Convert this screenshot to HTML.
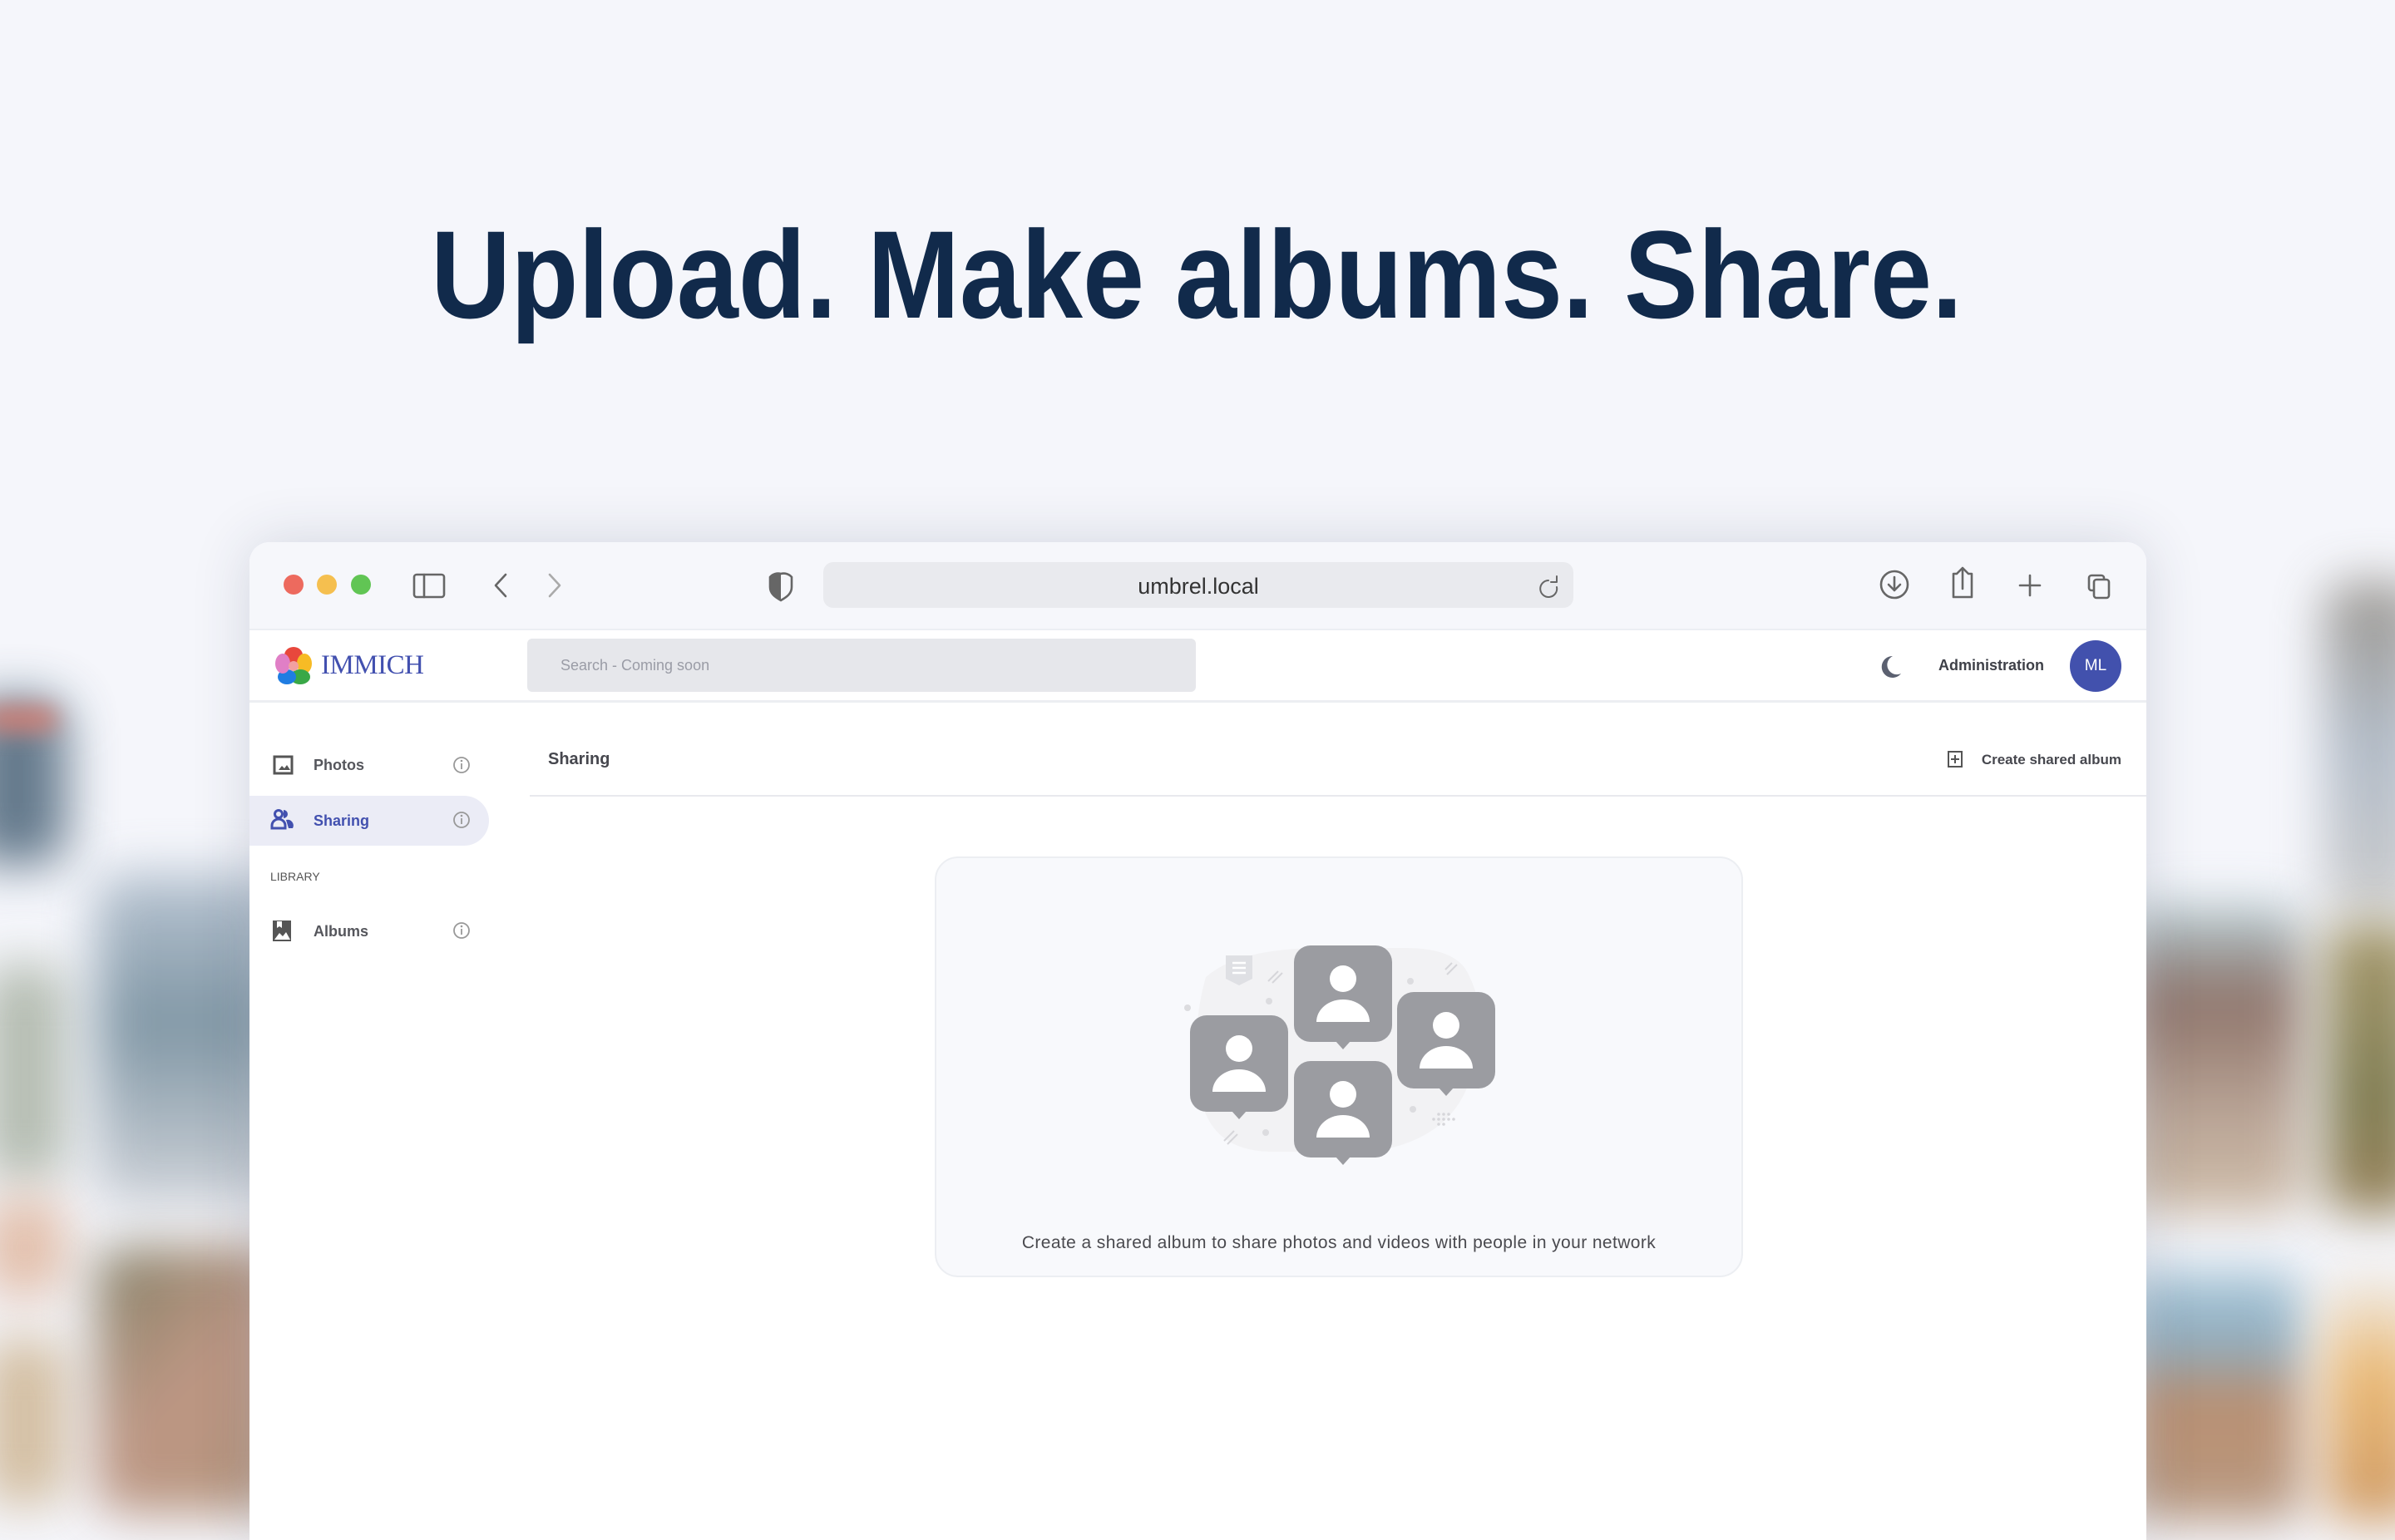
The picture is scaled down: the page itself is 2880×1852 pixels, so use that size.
<!DOCTYPE html>
<html><head><meta charset="utf-8"><style>
*{margin:0;padding:0;box-sizing:border-box}
body{width:2880px;height:1800px;overflow:hidden;background:#f5f6fb;position:relative;font-family:"Liberation Sans",sans-serif}
.b{position:absolute;filter:blur(30px);border-radius:30px;opacity:.85}
.t{position:absolute;white-space:nowrap}
</style></head><body>
<!-- blurred background photos -->
<div class="b" style="left:-40px;top:840px;width:120px;height:200px;background:#4a6378"></div>
<div class="b" style="left:-20px;top:850px;width:90px;height:30px;background:#d9786a;filter:blur(14px)"></div>
<div class="b" style="left:-20px;top:1160px;width:100px;height:260px;background:#a9b2a4"></div>
<div class="b" style="left:-20px;top:1440px;width:100px;height:120px;background:#dfb59c"></div>
<div class="b" style="left:-20px;top:1610px;width:100px;height:200px;background:#cdb491"></div>
<div class="b" style="left:115px;top:1050px;width:220px;height:400px;background:linear-gradient(#aebccb,#6d8797 45%,#c9cdd3)"></div>
<div class="b" style="left:115px;top:1500px;width:220px;height:320px;background:linear-gradient(135deg,#6e6b4c,#b48770 50%,#a98466)"></div>
<div class="b" style="left:2560px;top:1090px;width:210px;height:370px;background:linear-gradient(#a7c3ca,#7d5e52 30%,#b29a88 70%,#c9b39a)"></div>
<div class="b" style="left:2560px;top:1530px;width:210px;height:300px;background:linear-gradient(#97bdd2,#7fa0b4 30%,#b07d58 50%,#ad8a6e)"></div>
<div class="b" style="left:2795px;top:700px;width:120px;height:400px;background:linear-gradient(#8d8880,#a8b3c0 50%,#c4c4c4)"></div>
<div class="b" style="left:2795px;top:1110px;width:120px;height:350px;background:linear-gradient(#9a8a55,#6e6a38 60%,#8a7040)"></div>
<div class="b" style="left:2795px;top:1530px;width:120px;height:300px;background:linear-gradient(#eee,#e9b060 40%,#c88a4a)"></div>

<!-- heading -->
<svg style="position:absolute;left:0;top:0" width="2880" height="460"><text x="518" y="382" textLength="1842" lengthAdjust="spacingAndGlyphs" font-family="Liberation Sans" font-weight="bold" font-size="150" fill="#112a4b">Upload. Make albums. Share.</text></svg>

<!-- window -->
<div style="position:absolute;left:300px;top:652px;width:2281px;height:1200px;background:#fff;border-radius:24px 24px 0 0;box-shadow:0 0 70px rgba(40,50,80,.16);overflow:hidden">
 <div style="position:absolute;left:0;top:0;width:100%;height:106px;background:#f6f7fb;border-bottom:2px solid #eceef3"></div>
 <div style="position:absolute;left:0;top:106px;width:100%;height:87px;background:#fff;border-bottom:3px solid #eceef2"></div>
 <div style="position:absolute;left:690px;top:24px;width:902px;height:55px;background:#e9eaee;border-radius:12px"></div>
 <div class="t" style="left:690px;width:902px;top:38px;text-align:center;font-size:27px;color:#333">umbrel.local</div>
 <div style="position:absolute;left:334px;top:116px;width:804px;height:64px;background:#e6e7eb;border-radius:6px"></div>
 <div class="t" style="left:374px;top:138px;font-size:18px;color:#9a9ca6">Search - Coming soon</div>
 <div class="t" style="left:86px;top:130px;font-family:'Liberation Serif',serif;font-size:33px;color:#4250af;letter-spacing:-0.5px">IMMICH</div>
 <div class="t" style="left:2031px;top:138px;font-size:18px;color:#3e4048;font-weight:bold">Administration</div>
 <div style="position:absolute;left:2189px;top:118px;width:62px;height:62px;border-radius:50%;background:#4251ad;color:#fff;font-size:19px;text-align:center;line-height:62px">ML</div>
 <!-- sidebar -->
 <div style="position:absolute;left:0;top:305px;width:288px;height:60px;background:#ebecf6;border-radius:0 30px 30px 0"></div>
 <div class="t" style="left:77px;top:258px;font-size:18px;font-weight:bold;color:#55565c">Photos</div>
 <div class="t" style="left:77px;top:325px;font-size:18px;font-weight:bold;color:#4250af">Sharing</div>
 <div class="t" style="left:25px;top:394px;font-size:14px;color:#555">LIBRARY</div>
 <div class="t" style="left:77px;top:458px;font-size:18px;font-weight:bold;color:#55565c">Albums</div>
 <!-- content -->
 <div class="t" style="left:359px;top:250px;font-size:20px;font-weight:bold;color:#46474e">Sharing</div>
 <div style="position:absolute;left:337px;top:304px;width:1944px;height:2px;background:#e8e9ee"></div>
 <div class="t" style="right:30px;top:252px;font-size:17px;font-weight:bold;color:#46474e">Create shared album</div>
 <div style="position:absolute;left:824px;top:378px;width:972px;height:506px;background:#f8f9fc;border:2px solid #eceef2;border-radius:28px"></div>
 <div class="t" style="left:824px;width:972px;top:831px;text-align:center;font-size:21px;letter-spacing:0.4px;color:#4a4a4f">Create a shared album to share photos and videos with people in your network</div>
</div>

<!-- icons overlay -->
<svg style="position:absolute;left:0;top:0" width="2880" height="1800" fill="none">
 <circle cx="353" cy="703" r="12" fill="#ed6a5e"/><circle cx="393" cy="703" r="12" fill="#f5bf4f"/><circle cx="434" cy="703" r="12" fill="#61c554"/>
 <g stroke="#666" stroke-width="2.6" stroke-linecap="round" stroke-linejoin="round">
  <rect x="498" y="691" width="36" height="27" rx="3"/><line x1="510" y1="691" x2="510" y2="718"/>
  <path d="M608 691 L596 704 L608 717"/>
  <path d="M661 691 L673 704 L661 717" stroke="#aaa"/>
  <path d="M1862 698 a10 10 0 1 0 10 8 M1872 693 v7 h-7" stroke-width="2"/>
  <circle cx="2278" cy="703" r="16"/><path d="M2278 694 v16 M2271 703 l7 7 l7 -7"/>
  <path d="M2352 690 h-3 v28 h22 v-28 h-3 M2360 708 v-25 M2353 690 l7 -7 l7 7"/>
  <path d="M2441 692 v24 M2429 704 h24"/>
  <rect x="2512" y="692" width="18" height="18" rx="3"/><rect x="2518" y="697" width="18" height="22" rx="3" fill="#f6f7fb"/>
 </g>
 <path d="M939 690 a13 13 0 0 0 -13 4 v12 c0 8 6 12 13 16 c7 -4 13 -8 13 -16 v-12 a13 13 0 0 0 -13 -4z" stroke="#666" stroke-width="2.6"/>
 <path d="M939 690 v32 c-7 -4 -13 -8 -13 -16 v-12 a13 13 0 0 1 13 -4z" fill="#666"/>
 <!-- immich logo -->
 <g transform="translate(353,800)">
  <ellipse cx="0" cy="-12" rx="11" ry="10" fill="#e8473c"/>
  <ellipse cx="13" cy="-2" rx="9" ry="12" fill="#f7bb25"/>
  <ellipse cx="8" cy="14" rx="12" ry="9" fill="#39a847"/>
  <ellipse cx="-8" cy="14" rx="11" ry="9" fill="#1f7de2"/>
  <ellipse cx="-13" cy="-2" rx="9" ry="12" fill="#e07fc6"/>
  <circle cx="0" cy="1" r="6" fill="#f2a0a0"/>
 </g>
 <path d="M2276 789 a13 13 0 1 0 10 21 a11 11 0 0 1 -10 -21z" fill="#5b6070"/>
 <!-- sidebar icons -->
 <g stroke="#555" stroke-width="3">
  <rect x="330" y="910" width="21" height="20"/>
 </g>
 <path d="M335 926 l4 -5 l3 3 l3 -4 l4 6z" fill="#555"/>
 <g fill="#4250af"><circle cx="335" cy="979" r="4.5" fill="none" stroke="#4250af" stroke-width="3"/><path d="M341 974 a5 5 0 0 1 0 10z"/><path d="M327 996 v-3 a8 8 0 0 1 16 0 v3z" fill="none" stroke="#4250af" stroke-width="3"/><path d="M344 986 a7 7 0 0 1 8 10 h-5z"/></g>
 <rect x="328" y="1107" width="22" height="25" fill="#555"/><path d="M330 1130 l6 -8 l4 4 l4 -5 l5 9z" fill="#fff"/><path d="M333 1108 v8 l3 -2 l3 2 v-8z" fill="#fff"/>
 <g stroke="#999" stroke-width="1.8"><circle cx="555" cy="920" r="9"/><circle cx="555" cy="986" r="9"/><circle cx="555" cy="1119" r="9"/><path d="M555 918 v7 M555 984 v7 M555 1117 v7"/></g>
 <g fill="#999"><circle cx="555" cy="915" r="1.3"/><circle cx="555" cy="981" r="1.3"/><circle cx="555" cy="1114" r="1.3"/></g>
 <rect x="2343" y="904" width="16" height="18" stroke="#555" stroke-width="2"/><path d="M2351 908 v10 M2346 913 h10" stroke="#555" stroke-width="2"/>
 <!-- illustration -->
 <path d="M1450 1175 q40 -35 140 -35 h100 q60 0 75 30 q30 60 5 120 q-20 80 -120 95 h-120 q-70 0 -85 -60 q-15 -80 5 -150z" fill="#f2f2f4"/>
 <path d="M1474 1149 h32 v28 l-16 8 l-16 -8z" fill="#dfe0e4"/>
 <g stroke="#fff" stroke-width="2.5"><path d="M1482 1158 h16 M1482 1164 h16 M1482 1170 h16"/></g>
 <g fill="#dcdcdf"><circle cx="1428" cy="1212" r="4"/><circle cx="1526" cy="1204" r="4"/><circle cx="1696" cy="1180" r="4"/><circle cx="1699" cy="1334" r="4"/><circle cx="1522" cy="1362" r="4"/></g>
 <g stroke="#d6d6da" stroke-width="2"><path d="M1525 1180 l12 -12 M1530 1182 l12 -12 M1740 1172 l12 -12 M1738 1166 l8 -8 M1472 1372 l12 -12 M1476 1376 l12 -12"/></g>
 <g fill="#d6d6da"><circle cx="1730" cy="1340" r="1.8"/><circle cx="1736" cy="1340" r="1.8"/><circle cx="1742" cy="1340" r="1.8"/><circle cx="1724" cy="1346" r="1.8"/><circle cx="1730" cy="1346" r="1.8"/><circle cx="1736" cy="1346" r="1.8"/><circle cx="1742" cy="1346" r="1.8"/><circle cx="1748" cy="1346" r="1.8"/><circle cx="1730" cy="1352" r="1.8"/><circle cx="1736" cy="1352" r="1.8"/></g>
 <defs><g id="p"><rect x="0" y="0" width="118" height="116" rx="20" fill="#9b9ca1"/><path d="M50 115 l9 10 l9 -10z" fill="#9b9ca1"/><circle cx="59" cy="40" r="16" fill="#fff"/><path d="M27 92 a32 27 0 0 1 64 0z" fill="#fff"/></g></defs>
 <use href="#p" x="1556" y="1137"/>
 <use href="#p" x="1431" y="1221"/>
 <use href="#p" x="1680" y="1193"/>
 <use href="#p" x="1556" y="1276"/>
</svg>
</body></html>
